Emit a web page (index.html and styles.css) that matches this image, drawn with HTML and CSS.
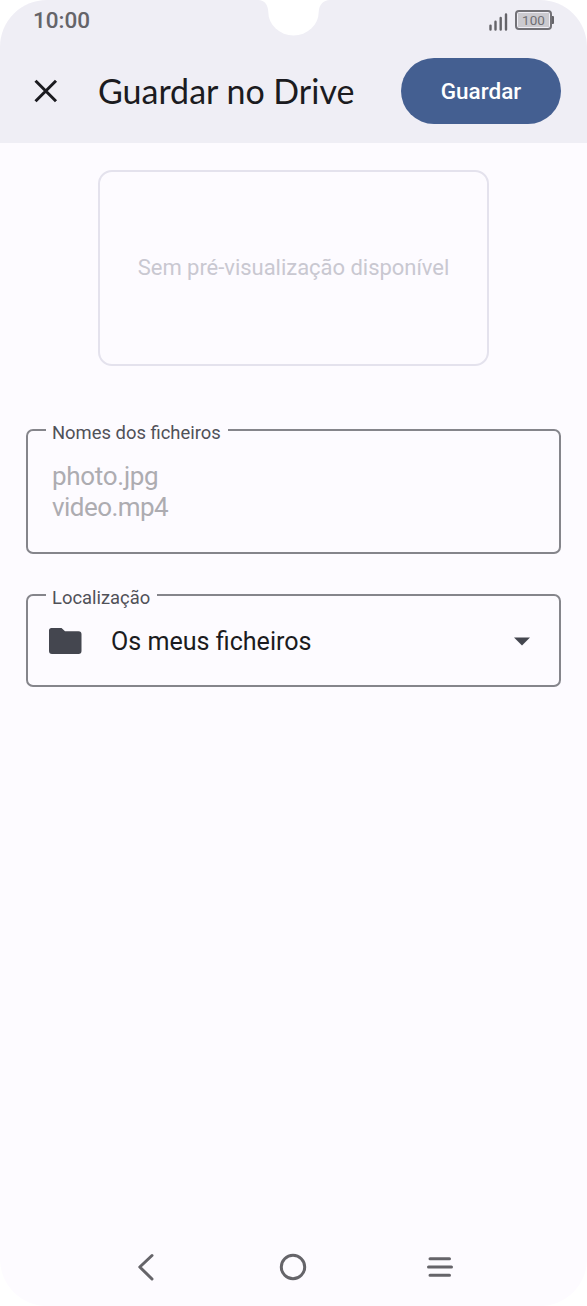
FILE: index.html
```html
<!DOCTYPE html>
<html lang="pt">
<head>
<meta charset="utf-8">
<title>Guardar no Drive</title>
<link rel="stylesheet" href="styles.css">
</head>
<body>
<div class="screen">
  <header class="top">
    <div class="status">
      <span class="clock">10:00</span>
      <div class="indicators">
        <svg class="signal" width="19" height="18" viewBox="0 0 19 18"><path d="M1.5 12.600V16.500M6.500 8.800V16.500M11.700 5V16.500M17 1.500V16.500"/></svg>
        <div class="battery"><span class="level">100</span></div>
      </div>
    </div>
    <div class="bar">
      <svg class="close" width="26" height="26" viewBox="0 0 26 26"><path d="M2.500 2.800L23 23.200M23 2.800L2.500 23.200"/></svg>
      <h1 class="title">Guardar no Drive</h1>
      <button class="save">Guardar</button>
    </div>
    <svg class="notch" width="84" height="36" viewBox="0 0 84 36"><path d="M7 0C14 0 17 5 17.300 12A24.700 23 0 0 0 67.700 12C68 5 72 0 79 0Z"/></svg>
  </header>
  <main class="content">
    <div class="preview"><span class="preview-text">Sem pré-visualização disponível</span></div>
    <fieldset class="field names">
      <legend class="label"><span class="label-names">Nomes dos ficheiros</span></legend>
      <div class="files"><div class="photo">photo.jpg</div><div class="video">video.mp4</div></div>
    </fieldset>
    <fieldset class="field location">
      <legend class="label"><span class="label-location">Localização</span></legend>
      <div class="choice">
        <svg class="folder" width="34" height="28" viewBox="0 0 34 28"><path d="M3.500 1H13.500L17 4.300H30.500Q33.500 4.300 33.500 7.300V24Q33.500 27 30.500 27H4Q1 27 1 24V3.500Q1 1 3.500 1Z"/></svg>
        <span class="folder-name">Os meus ficheiros</span>
        <svg class="arrow" width="16" height="9" viewBox="0 0 16 9"><path d="M0 .4H16L8 8.400Z"/></svg>
      </div>
    </fieldset>
  </main>
  <nav class="nav">
    <svg class="nav-icon" width="30" height="30" viewBox="0 0 30 30"><path d="M21 3.500L8.800 15L21 27"/></svg>
    <svg class="nav-icon" width="30" height="30" viewBox="0 0 30 30"><circle cx="15" cy="15" r="11.700"/></svg>
    <svg class="nav-icon" width="30" height="30" viewBox="0 0 30 30"><path d="M5 6.700H24.500M3.500 15H26.500M5 23.200H24.500"/></svg>
  </nav>
</div>
</body>
</html>
```
FILE: styles.css
```css
* { box-sizing: border-box; }
body { margin: 0; background: #fff; font-family: Roboto, "Liberation Sans", sans-serif; }
.screen { display: flex; flex-direction: column; width: 587px; height: 1306px; background: #fdfbff; border-radius: 47px; overflow: hidden; }
.top { position: relative; height: 143px; background: #efeef5; }
.status { display: flex; justify-content: space-between; height: 41px; padding: 0 35px 0 33px; color: #656469; }
.clock { font-size: 22.500px; line-height: 41px; font-weight: 500; }
.indicators { display: flex; align-items: flex-start; gap: 7px; padding-top: 10px; }
.signal { margin-top: 3px; fill: none; stroke: #656469; stroke-width: 2.400; stroke-linecap: round; }
.battery { position: relative; width: 37px; height: 20px; padding: 1px; border: 2px solid #727176; border-radius: 4px; }
.battery::after { content: ""; position: absolute; right: -4px; top: 4px; width: 2px; height: 8px; background: #656469; border-radius: 0 1px 1px 0; }
.level { display: block; height: 14px; background: #cbcacf; color: #706f74; font-size: 13.500px; line-height: 15px; text-align: center; }
.bar { display: flex; align-items: center; height: 100px; padding: 0 26px 0 33px; }
.close { fill: none; stroke: #1b1b20; stroke-width: 3; }
.title { flex: 1; margin: 0 0 0 39px; font-family: Lato, sans-serif; font-size: 34px; line-height: 44px; font-weight: 400; color: #1b1b20; white-space: nowrap; }
.save { width: 160px; height: 66px; padding: 0 0 1px; border: 0; border-radius: 33px; background: #445f91; color: #fff; font-family: Roboto, sans-serif; font-size: 22.500px; font-weight: 500; }
.notch { position: absolute; left: 251px; top: 0; fill: #fff; }
.content { flex: 1; padding: 27px 26px 0; }
.preview { display: flex; align-items: center; justify-content: center; width: 391px; height: 196px; margin: 0 auto; padding-bottom: 1px; border: 2px solid #e4e2ed; border-radius: 14px; color: #c9c8d1; font-size: 22px; letter-spacing: -.03px; white-space: nowrap; }
.field { min-width: 0; margin: 0; border: 2px solid #85858b; border-radius: 7px; }
.names { height: 136px; margin-top: 52px; padding: 0 18px; }
.location { height: 104px; margin-top: 29px; padding: 0 18px; }
.label { height: 24px; padding: 5px 7px 0 6px; font-size: 18.400px; line-height: 20px; color: #505158; }
.files { padding: 19px 6px 0; color: #adacb1; font-size: 26px; line-height: 31px; }
.photo { letter-spacing: -.3px; }
.video { letter-spacing: -.55px; }
.choice { display: flex; align-items: center; height: 46px; margin: 11px 11px 0 2px; }
.folder { fill: #44464f; }
.folder-name { margin-left: 29px; flex: 1; font-size: 25.100px; color: #1b1b20; }
.arrow { fill: #44464f; }
.nav { display: flex; justify-content: center; gap: 117px; height: 54px; padding-right: 1px; }
.nav-icon { fill: none; stroke: #656469; stroke-width: 3; stroke-linecap: round; stroke-linejoin: round; }
```
